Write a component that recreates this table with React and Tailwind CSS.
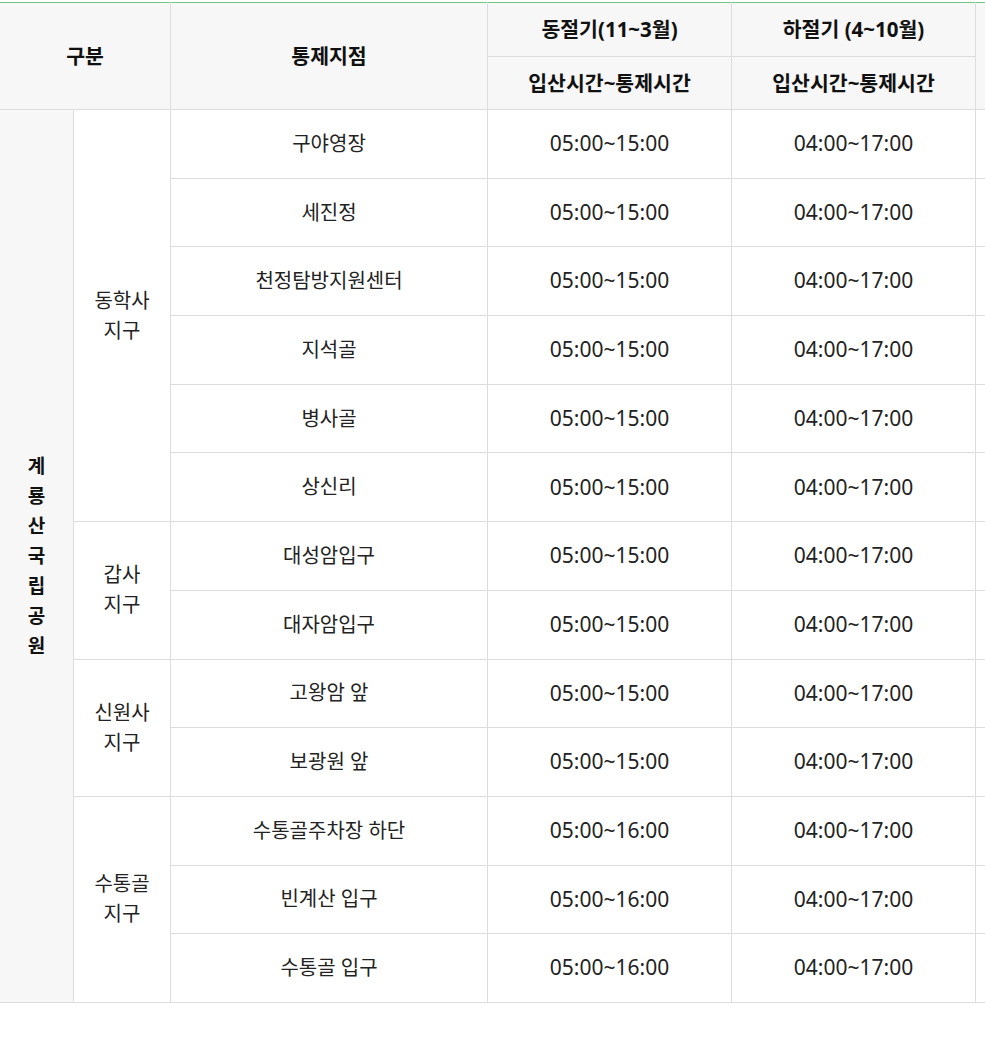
const ROWS = [
  { district: ['동학사', '지구'], places: ['구야영장', '세진정', '천정탐방지원센터', '지석골', '병사골', '상신리'], winter: '05:00~15:00' },
  { district: ['갑사', '지구'], places: ['대성암입구', '대자암입구'], winter: '05:00~15:00' },
  { district: ['신원사', '지구'], places: ['고왕암 앞', '보광원 앞'], winter: '05:00~15:00' },
  { district: ['수통골', '지구'], places: ['수통골주차장 하단', '빈계산 입구', '수통골 입구'], winter: '05:00~16:00' },
]

const PARK = '계룡산국립공원'.split('')
const TOTAL = ROWS.reduce((n, g) => n + g.places.length, 0)

const cell = 'border border-[#dddddd] text-center align-middle'

export default function App() {
  return (
    <div className="w-[985px] h-[1055px] overflow-hidden bg-white pt-[2px] text-[#222]" style={{ fontFamily: '"Noto Sans", "Noto Sans CJK KR", sans-serif' }}>
      <table className="w-[1222px] border-collapse table-fixed border-t border-t-[#6cc77f] -ml-px">
        <colgroup>
          <col className="w-[74px]" />
          <col className="w-[97px]" />
          <col className="w-[317px]" />
          <col className="w-[244px]" />
          <col className="w-[244px]" />
          <col className="w-[246px]" />
        </colgroup>
        <thead>
          <tr className="h-[54px] bg-[#f7f7f7] text-[20.5px] font-bold text-[#111]">
            <th colSpan={2} rowSpan={2} className={`${cell} border-t-[#6cc77f]`}>구분</th>
            <th rowSpan={2} className={`${cell} border-t-[#6cc77f]`}>통제지점</th>
            <th className={`${cell} border-t-[#6cc77f]`}>동절기(11~3월)</th>
            <th className={`${cell} border-t-[#6cc77f]`}>하절기 (4~10월)</th>
            <th rowSpan={2} className={`${cell} border-t-[#6cc77f]`}></th>
          </tr>
          <tr className="h-[53px] bg-[#f7f7f7] text-[20.5px] font-bold text-[#111]">
            <th className={cell}>입산시간~통제시간</th>
            <th className={cell}>입산시간~통제시간</th>
          </tr>
        </thead>
        <tbody className="text-[20px] text-[#222]">
          {ROWS.map((g, gi) =>
            g.places.map((p, pi) => (
              <tr key={p} className="h-[68.7px]">
                {gi === 0 && pi === 0 && (
                  <td rowSpan={TOTAL} className={`${cell} bg-[#f7f7f7] font-bold text-[19px] leading-[30px] text-[#111]`}>
                    {PARK.map((c, i) => (
                      <div key={i}>{c}</div>
                    ))}
                  </td>
                )}
                {pi === 0 && (
                  <td rowSpan={g.places.length} className={`${cell} leading-[30px]`}>
                    {g.district.map((d) => (
                      <div key={d}>{d}</div>
                    ))}
                  </td>
                )}
                <td className={cell}>{p}</td>
                <td className={`${cell} text-[21px]`}>{g.winter}</td>
                <td className={`${cell} text-[21px]`}>04:00~17:00</td>
                <td className={cell}></td>
              </tr>
            ))
          )}
        </tbody>
      </table>
    </div>
  )
}
